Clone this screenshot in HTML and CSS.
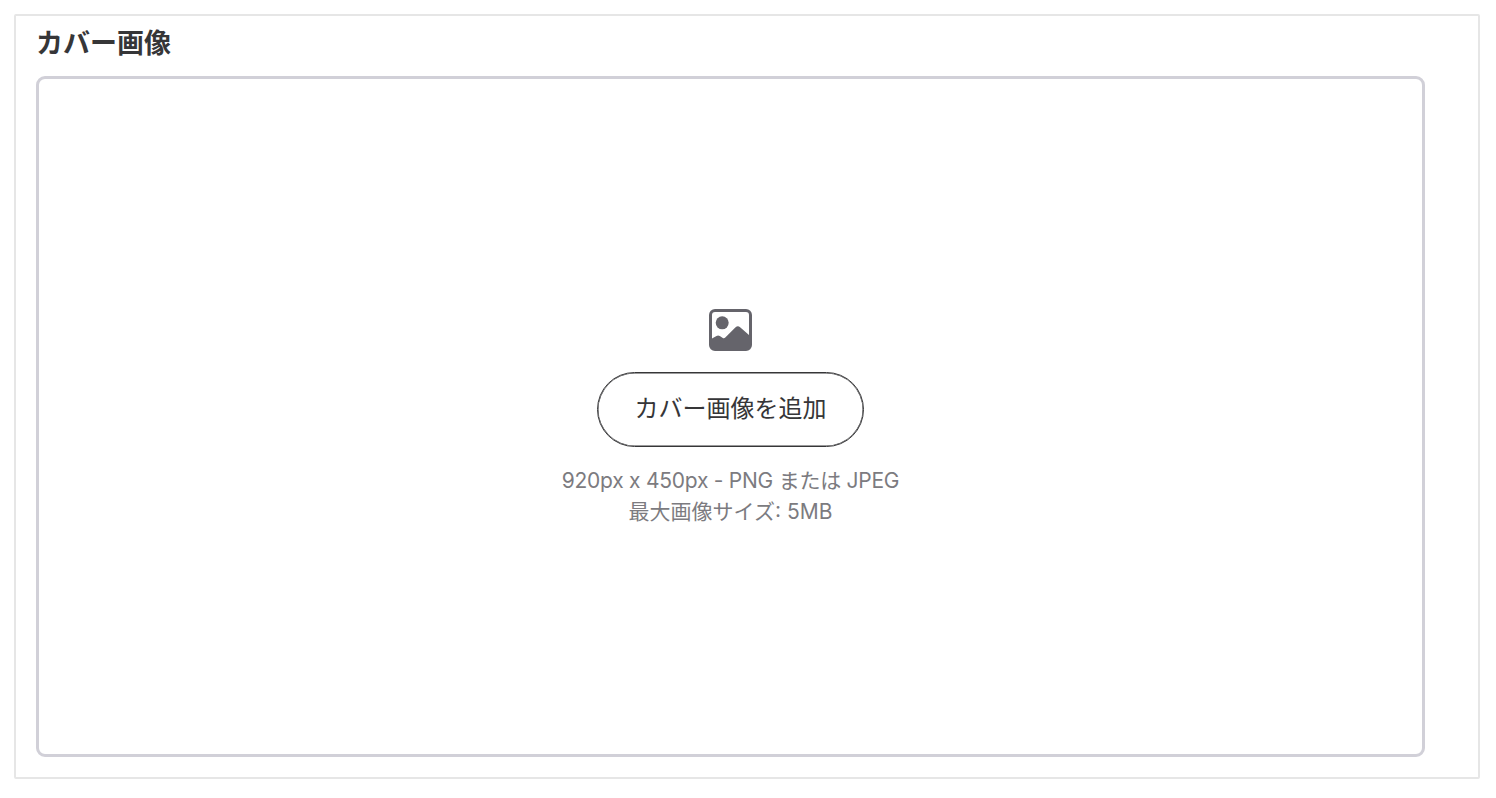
FILE: index.html
```html
<!DOCTYPE html>
<html lang="ja">
<head>
    <meta charset="UTF-8">
    <meta name="viewport" content="width=device-width, initial-scale=1.0">
    <title>カバー画像</title>
    <link rel="stylesheet" href="styles.css">
</head>
<body>
    <div class="container">
        <h3>カバー画像</h3>

        <div class="upload">
            <svg class="icon" viewBox="0 0 43 43">
                <path fill="#65646b" fill-rule="evenodd" d="M6 0h31a6 6 0 0 1 6 6v30a6 6 0 0 1-6 6H6a6 6 0 0 1-6-6V6a6 6 0 0 1 6-6ZM6 3a3 3 0 0 0-3 3v23.600l4.500-2.600q1.700-.9 3.300.100l3 1.800q1.300.7 2.500-.3l10.300-10.300q2.300-2 4.500 0l8.900 7.700V6a3 3 0 0 0-3-3Z"/>
                <circle cx="13.200" cy="13.800" r="6.500" fill="#65646b"/>
            </svg>
            <button class="add-button">カバー画像を追加</button>
            <p class="hint"><span class="formats">920px x 450px - PNG または JPEG</span><br>最大画像サイズ: 5MB</p>
        </div>
    </div>
</body>
</html>
```
FILE: styles.css
```css
* {
    box-sizing: border-box;
}
body {
    margin: 14px 16px 14px 14px;
    background-color: white;
    font-family: Inter, "Noto Sans CJK JP", sans-serif;
}
.container {
    height: 765px;
    padding: 8px 53px 0 20px;
    border: 2px solid #e6e6e6;
    border-radius: 2px;
}
h3 {
    margin: 0 0 12px;
    color: #363638;
    font-size: 27px;
    font-weight: 700;
    line-height: 40px;
}
.upload {
    display: flex;
    flex-direction: column;
    align-items: center;
    height: 681px;
    padding-top: 230px;
    border: 3px solid #d1d0d8;
    border-radius: 9px;
}
.icon {
    width: 43px;
    height: 43px;
}
.add-button {
    width: 267px;
    height: 75px;
    margin-top: 20px;
    padding: 0 0 7px;
    border: 1px solid #363638;
    border-radius: 38px;
    box-shadow: inset 0 0 0 0.5px #363638;
    background-color: white;
    color: #363638;
    font-family: inherit;
    font-size: 24px;
    cursor: pointer;
}
.hint {
    margin: 18px 0 0;
    color: #7c7b80;
    font-size: 21px;
    line-height: 31px;
    text-align: center;
}
.formats {
    letter-spacing: -0.25px;
}
```
